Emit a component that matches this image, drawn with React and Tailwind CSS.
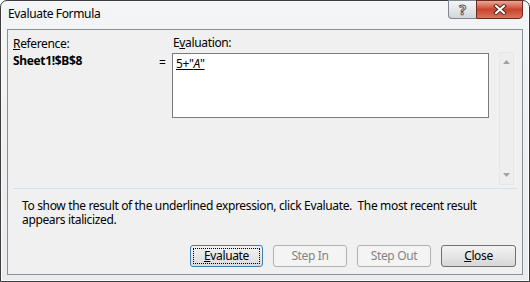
import React from "react";

const font = { fontFamily: '"Noto Sans", "Open Sans", sans-serif' };

const CloseGlyph = () => (
  <svg width="14" height="11" viewBox="0 0 14 11">
    <path d="M3 2 L11 9 M11 2 L3 9" stroke="#4a2a24" strokeWidth="4" strokeLinecap="square" />
    <path d="M3 2 L11 9 M11 2 L3 9" stroke="#ffffff" strokeWidth="2" strokeLinecap="square" />
  </svg>
);

const Arrow = ({ down }) => (
  <svg width="7" height="4" viewBox="0 0 7 4">
    <path d={down ? "M0 0 L7 0 L3.5 4 Z" : "M3.5 0 L7 4 L0 4 Z"} fill="#a3a3a3" />
  </svg>
);

const Btn = ({ children, disabled, focused }) => {
  if (disabled)
    return (
      <div className="w-[74px] h-[22px] rounded-[3px] border border-[#adb2b5] bg-[#f4f4f4] flex items-center justify-center text-[#838383]">
        {children}
      </div>
    );
  if (focused)
    return (
      <div className="w-[73px] h-[22px] rounded-[3px] border border-[#3c7fb1] bg-gradient-to-b from-[#f2f2f2] to-[#dcdcdc] p-[2px]">
        <div className="w-full h-full border border-dotted border-black flex items-center justify-center">
          {children}
        </div>
      </div>
    );
  return (
    <div className="w-[75px] h-[22px] rounded-[3px] border border-[#707070] bg-gradient-to-b from-[#f3f3f3] via-[#e6e6e6] to-[#d6d6d6] flex items-center justify-center">
      {children}
    </div>
  );
};

export default function App() {
  return (
    <div className="w-[530px] h-[282px] bg-white overflow-hidden tracking-[-0.35px]" style={font}>
      <div className="w-[530px] h-[282px] rounded-t-[7px] border border-[#3c3c3c] bg-gradient-to-b from-[#f4f5f6] to-[#e9ebee] flex flex-col shadow-[inset_0_0_0_1px_#fbfbfb]">
        <div className="h-[28px] flex items-start justify-between pl-[7px] pr-[6px]">
          <div className="pt-[5px] text-[12px] text-black leading-[16px]">Evaluate Formula</div>
          <div className="flex">
            <div className="w-[28px] h-[19px] -mt-px rounded-bl-[4px] border border-[#7e8793] border-r-0 bg-gradient-to-b from-[#f6f6f6] to-[#d3d6da] flex items-center justify-center">
              <span className="text-[14px] font-bold leading-none text-white [-webkit-text-stroke:1px_#5a5a5a]">?</span>
            </div>
            <div className="w-[47px] h-[19px] -mt-px rounded-br-[4px] border border-[#6d2a1e] bg-gradient-to-b from-[#e9a798] via-[#c9432c] to-[#d9735c] flex items-center justify-center">
              <CloseGlyph />
            </div>
          </div>
        </div>
        <div className="mx-[6px] mb-[6px] flex-1 border border-[#8a8f96] bg-[#f0f0f0] flex flex-col text-[12px] text-black">
          <div className="flex pl-[5px] pt-[6px]">
            <div className="w-[146px] flex flex-col">
              <div className="leading-[16px]">
                <span className="underline">R</span>eference:
              </div>
              <div className="mt-[1px] font-bold leading-[16px]">Sheet1!$B$8</div>
            </div>
            <div className="w-[13px] pt-[19px] leading-[16px]">=</div>
            <div className="flex flex-col -mt-px">
              <div className="pl-[1px] leading-[16px]">
                E<span className="underline">v</span>aluation:
              </div>
              <div className="mt-[2px] w-[317px] h-[65px] border border-[#7a7a7a] bg-white px-[3px] pt-[1px]">
                <span className="underline leading-[14px]">
                  5+"<span className="italic">A</span>"
                </span>
              </div>
            </div>
            <div className="ml-[10px] mt-[16px] w-[15px] h-[133px] border border-[#e6e6e6] bg-[#eeeeee] flex flex-col items-center justify-between py-[7px]">
              <Arrow />
              <Arrow down />
            </div>
          </div>
          <div className="mx-[5px] mt-[3px] h-px bg-[#d5dfe5]" />
          <div className="pl-[14px] pt-[10px] leading-[14px] w-[470px]">
            To show the result of the underlined expression, click Evaluate.&nbsp; The most recent result appears italicized.
          </div>
          <div className="mt-auto mb-[7px] flex justify-end gap-[10px] pr-[6px]">
            <Btn focused>
              <span>
                <span className="underline">E</span>valuate
              </span>
            </Btn>
            <Btn disabled>Step In</Btn>
            <Btn disabled>Step Out</Btn>
            <Btn>
              <span>
                <span className="underline">C</span>lose
              </span>
            </Btn>
          </div>
        </div>
      </div>
    </div>
  );
}
